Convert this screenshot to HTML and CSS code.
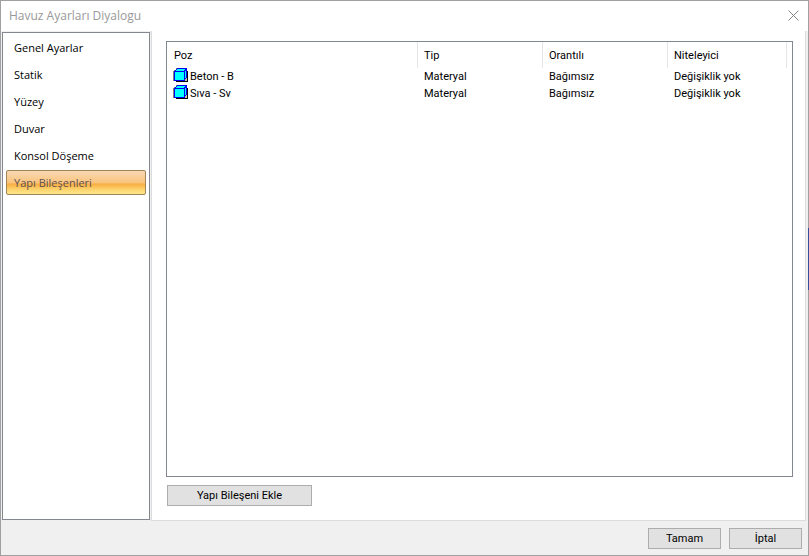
FILE: index.html
```html
<!DOCTYPE html>
<html lang="tr">
<head>
<meta charset="utf-8">
<title>Havuz Ayarları Diyalogu</title>
<link rel="stylesheet" href="styles.css">
</head>
<body>
<svg class="defs" width="0" height="0" aria-hidden="true">
  <symbol id="cube" viewBox="0 0 15 15" shape-rendering="crispEdges">
    <path fill="#000" d="M14 3h1v11H3v-1h11z"/>
    <path fill="#c8bca4" d="M12 10h2v3h-2z"/>
    <path fill="#808080" d="M3 0h1v1H3zM1 2h1v1H1zM0 3h1v10H0z"/>
    <path fill="#0000f0" d="M4 0h10v10h-1v1h-1v2H1V3h1V2h1V1h1z"/>
    <path fill="#0ff" d="M2 4h9v8H2zM4 1h8v1h-1v1H3V2h1zM12 3h1v7h-1z"/>
  </symbol>
</svg>
<div class="dialog">
  <header class="titlebar">
    <h1>Havuz Ayarları Diyalogu</h1>
    <button class="close" type="button" aria-label="Kapat">
      <svg width="11" height="11" viewBox="0 0 11 11"><path d="M.5.5l10 10M10.5.5l-10 10" stroke="#858585" fill="none"/></svg>
    </button>
  </header>
  <div class="content">
    <nav class="sidebar">
      <a href="#genel">Genel Ayarlar</a>
      <a href="#statik">Statik</a>
      <a href="#yuzey">Yüzey</a>
      <a href="#duvar">Duvar</a>
      <a href="#konsol">Konsol Döşeme</a>
      <a href="#yapi" class="selected" aria-current="page">Yapı Bileşenleri</a>
    </nav>
    <main class="panel">
      <div class="list">
        <table>
          <colgroup><col class="c-poz"><col class="c-mid"><col class="c-mid"><col class="c-last"><col></colgroup>
          <thead><tr><th>Poz</th><th>Tip</th><th>Orantılı</th><th>Niteleyici</th></tr></thead>
          <tbody>
            <tr><td><span class="item"><svg class="cube"><use href="#cube"/></svg>Beton - B</span></td><td>Materyal</td><td>Bağımsız</td><td>Değişiklik yok</td></tr>
            <tr><td><span class="item"><svg class="cube"><use href="#cube"/></svg>Sıva - Sv</span></td><td>Materyal</td><td>Bağımsız</td><td>Değişiklik yok</td></tr>
          </tbody>
        </table>
      </div>
      <button class="btn add" type="button">Yapı Bileşeni Ekle</button>
    </main>
  </div>
  <footer class="footer">
    <button class="btn" type="button">Tamam</button>
    <button class="btn" type="button">İptal</button>
  </footer>
  <span class="backdrop"></span>
</div>
</body>
</html>
```
FILE: styles.css
```css
* { box-sizing: border-box; }
body {
  margin: 0;
  font: 11px/17px Roboto, "Liberation Sans", sans-serif;
  color: #000;
}
.defs { position: absolute; }
.dialog {
  position: relative;
  min-height: 100vh;
  display: flex;
  flex-direction: column;
  border: 1px solid #a0a0a0;
  background: #f0f0f0;
}
.titlebar {
  display: flex;
  align-items: center;
  justify-content: space-between;
  height: 30px;
  padding: 0 9px 0 8px;
  background: #fff;
}
.titlebar h1 {
  margin: 0;
  font: 12px/16px "Open Sans", "Noto Sans", sans-serif;
  color: #999;
}
.close {
  display: flex;
  padding: 0 0 2px;
  border: 0;
  background: none;
}
.content {
  flex: 1;
  display: flex;
  gap: 1px;
  padding-right: 2px;
}
.sidebar {
  display: flex;
  flex-direction: column;
  gap: 2px;
  width: 148px;
  margin: 1px 0 1px 1px;
  padding: 2px 3px;
  border: 1px solid #828790;
  background: #fff;
}
.sidebar a {
  height: 25px;
  padding: 0 7px;
  border: 1px solid transparent;
  border-radius: 2px;
  font: 11px/23px "Open Sans", "Noto Sans", sans-serif;
  color: #000;
  text-decoration: none;
}
.sidebar .selected {
  border-color: #a08458;
  background: linear-gradient(#f8d8b4, #fac47c 52%, #f8ac42 56%, #fcd670 82%, #fee68c);
  color: #605050;
}
.panel {
  flex: 1;
  display: flex;
  flex-direction: column;
  align-items: flex-start;
  gap: 8px;
  padding: 10px 12px 14px 14px;
  border: solid #dcdcdc;
  border-width: 0 1px 1px;
  background: #fff;
}
.list {
  flex: 1;
  align-self: stretch;
  border: 1px solid #828790;
}
table {
  width: 100%;
  table-layout: fixed;
  border-collapse: separate;
  border-spacing: 0;
}
.c-poz { width: 251px; }
.c-mid { width: 125px; }
.c-last { width: 119px; }
th, td {
  padding: 0 0 0 6px;
  font-weight: 400;
  text-align: left;
  white-space: nowrap;
}
th {
  height: 26px;
  border-right: 1px solid #e5e5e5;
}
th:first-child { padding-left: 7px; }
td { height: 17px; }
.item {
  display: flex;
  align-items: center;
  gap: 2px;
}
.cube { width: 15px; height: 17px; padding-bottom: 2px; }
.btn {
  width: 73px;
  height: 21px;
  padding: 0;
  border: 1px solid #adadad;
  background: #e1e1e1;
  color: #000;
  font: inherit;
}
.add { width: 145px; margin-left: 1px; }
.footer {
  display: flex;
  justify-content: flex-end;
  gap: 8px;
  padding: 7px 6px 6px;
}
/* part of the window behind that shows at the right edge */
.backdrop {
  position: absolute;
  top: 227px;
  right: -1px;
  width: 1px;
  height: 62px;
  background: #34509c;
}
```
